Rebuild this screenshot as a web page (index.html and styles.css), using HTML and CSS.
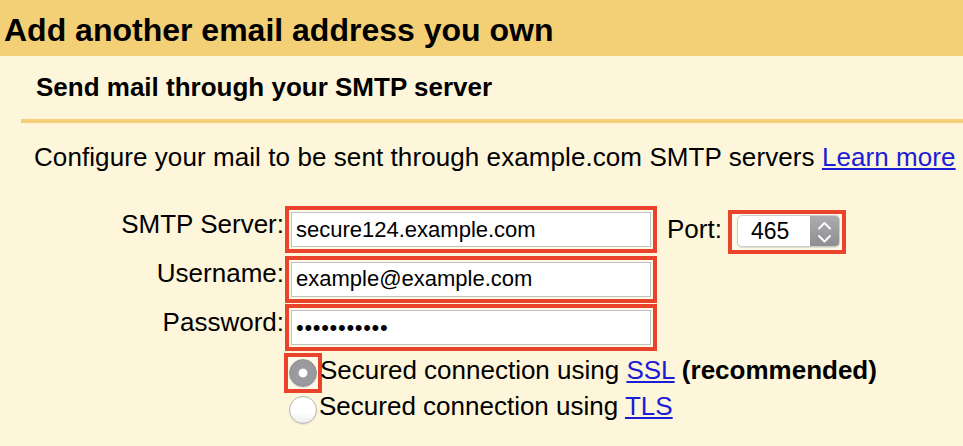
FILE: index.html
```html
<!DOCTYPE html>
<html lang="en">
<head>
<meta charset="utf-8">
<title>Add another email address you own</title>
<link rel="stylesheet" href="styles.css">
</head>
<body>
<div class="title">Add another email address you own</div>
<div class="subtitle">Send mail through your SMTP server</div>
<p class="intro">Configure your mail to be sent through example.com SMTP servers <a href="#">Learn more</a></p>
<div class="form">
  <div class="row">
    <label class="lbl" for="smtp">SMTP Server:</label>
    <div class="hl"><input class="field" id="smtp" type="text" value="secure124.example.com"></div>
    <span class="port-lbl">Port:</span>
    <div class="hl port-hl">
      <div class="select">
        <span class="sel-val">465</span>
        <span class="stepper">
          <svg width="29" height="30" viewBox="0 0 29 30" aria-hidden="true">
            <polyline points="9,12.5 14.5,7 20,12.5" fill="none" stroke="#fff" stroke-width="1.8" stroke-linecap="round" stroke-linejoin="round"/>
            <polyline points="9,20 14.5,25.5 20,20" fill="none" stroke="#fff" stroke-width="1.8" stroke-linecap="round" stroke-linejoin="round"/>
          </svg>
        </span>
      </div>
    </div>
  </div>
  <div class="row">
    <label class="lbl" for="user">Username:</label>
    <div class="hl"><input class="field" id="user" type="text" value="example@example.com"></div>
  </div>
  <div class="row">
    <label class="lbl" for="pass">Password:</label>
    <div class="hl"><input class="field pw" id="pass" type="password" value="abcdefghijk"></div>
  </div>
  <div class="radio-row first">
    <div class="hl radio-hl"><span class="radio checked"></span></div>
    <span class="rtext">Secured connection using <a href="#">SSL</a> <b>(recommended)</b></span>
  </div>
  <div class="radio-row second">
    <span class="radio"></span>
    <span class="rtext">Secured connection using <a href="#">TLS</a></span>
  </div>
</div>
</body>
</html>
```
FILE: styles.css
```css
html, body {
  margin: 0;
  padding: 0;
}
body {
  background: #fdf6da;
  color: #000;
  font-family: "Liberation Sans", Arial, Helvetica, sans-serif;
  width: 963px;
  height: 446px;
  overflow: hidden;
}
a {
  color: #1c1cd6;
  text-decoration: underline;
}
.title {
  background: #f3cf75;
  height: 56px;
  box-sizing: border-box;
  padding: 4px 0 0 4px;
  line-height: 52px;
  font-size: 32px;
  font-weight: bold;
  white-space: nowrap;
}
.subtitle {
  margin-left: 21px;
  padding-left: 15px;
  height: 63px;
  line-height: 63px;
  font-size: 26px;
  font-weight: bold;
  border-bottom: 4px solid #f3cf75;
  white-space: nowrap;
}
.intro {
  margin: 19px 0 0 34px;
  font-size: 26px;
  line-height: 30px;
  letter-spacing: 0.08px;
  white-space: nowrap;
}
.form {
  margin-top: 34px;
}
.row {
  display: flex;
  align-items: flex-start;
  margin-bottom: 1.5px;
}
.lbl {
  width: 284px;
  margin-right: 1px;
  text-align: right;
  font-size: 26px;
  line-height: 30px;
  padding-top: 2.5px;
  white-space: nowrap;
}
.hl {
  border: 4px solid #e9432b;
  padding: 2px;
  background: #fdf9e8;
}
.field {
  display: block;
  margin: 0;
  width: 360px;
  height: 35px;
  box-sizing: border-box;
  border: 1px solid #c2c2c2;
  padding: 0 4px;
  background: #fff;
  font-family: "Liberation Sans", Arial, Helvetica, sans-serif;
  font-size: 22px;
  color: #000;
  outline: none;
}
.field.pw {
  letter-spacing: 0.7px;
}
.port-lbl {
  margin-left: 10px;
  margin-right: 6px;
  font-size: 26px;
  line-height: 30px;
  padding-top: 8px;
}
.port-hl {
  margin-top: 4px;
  padding: 1px 2px 3px 5px;
}
.select {
  width: 103px;
  height: 32px;
  box-sizing: border-box;
  display: flex;
  border: 1px solid #cdcdcd;
  border-radius: 5px;
  background: #fff;
  overflow: hidden;
  box-shadow: 0 1px 1px rgba(0, 0, 0, 0.12);
}
.sel-val {
  flex: 1;
  padding-left: 13px;
  font-size: 23px;
  line-height: 30px;
}
.stepper {
  width: 29px;
  display: flex;
  background: linear-gradient(#adadb0, #8e8e92);
}
.radio-row {
  display: flex;
  align-items: flex-start;
  padding-left: 284px;
}
.radio-row.first {
  height: 40px;
}
.radio-hl {
  width: 30px;
  height: 32px;
  padding: 0;
}
.radio {
  display: block;
  width: 28px;
  height: 28px;
  box-sizing: border-box;
  border-radius: 50%;
  border: 1px solid #b3b3b3;
  background: linear-gradient(#ffffff 60%, #ededed);
  box-shadow: 0 1px 1px rgba(0, 0, 0, 0.08);
}
.radio-hl .radio {
  margin: 2px 0 0 1px;
}
.radio.checked {
  border-color: #8f8f93;
  background: radial-gradient(circle, #ffffff 0, #ffffff 4px, #9c9ca0 4.8px, #98989c 100%);
}
.radio-row.second .radio {
  margin: 3px 0 0 5px;
}
.rtext {
  font-size: 26px;
  line-height: 26px;
  white-space: nowrap;
}
.radio-row.first .rtext {
  padding-top: 4px;
  margin-left: -2px;
}
.radio-row.second .rtext {
  margin-left: 2px;
}
```
